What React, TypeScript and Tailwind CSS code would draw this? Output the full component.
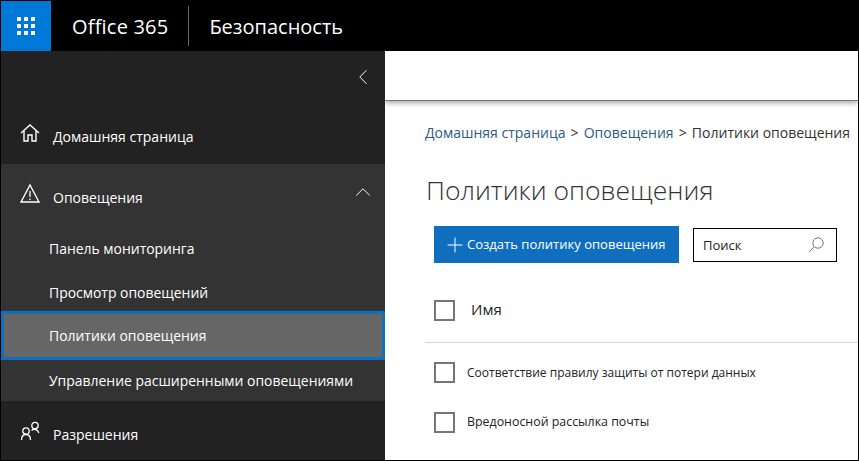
import { ChevronLeft, ChevronUp, Plus } from 'lucide-react';

const font = "font-['Open_Sans','Noto_Sans',sans-serif]";

function WaffleIcon() {
  const cells = [0, 7, 14];
  return (
    <svg width="18" height="18" viewBox="0 0 18 18" fill="#ffffff">
      {cells.map((y) => cells.map((x) => <rect key={`${x}-${y}`} x={x} y={y} width="4" height="4" />))}
    </svg>
  );
}

function HomeIcon() {
  return (
    <svg width="20" height="20" viewBox="0 0 20 20" fill="none" stroke="#ffffff" strokeWidth="1.4">
      <path d="M1 10 L10 2 L19 10" />
      <path d="M4 8 V18 H8 V12 H12 V18 H16 V8" />
    </svg>
  );
}

function AlertIcon() {
  return (
    <svg className="mb-[2px]" width="20" height="20" viewBox="0 0 20 20" fill="none" stroke="#ffffff" strokeWidth="1.4">
      <path d="M10 2 L19 19 H1 Z" />
      <path d="M10 8 V14 M10 15.5 V17" stroke="#e8e8e8" />
    </svg>
  );
}

function PeopleIcon() {
  return (
    <svg width="20" height="20" viewBox="0 0 20 20" fill="none" stroke="#ffffff" strokeWidth="1.3">
      <circle cx="6" cy="10" r="3.2" />
      <path d="M1.5 19 C1.5 15.5 3.5 13.5 6 13.5 C8.5 13.5 10.5 15.5 10.5 19" />
      <circle cx="15" cy="4.5" r="3.2" />
      <path d="M11.5 9.5 C13.5 7.5 18 8 18.8 12" />
    </svg>
  );
}

function SearchGlyph() {
  return (
    <svg width="16" height="16" viewBox="0 0 16 16" fill="none" stroke="#777777" strokeWidth="1">
      <circle cx="10" cy="6" r="5.2" />
      <path d="M6.2 9.8 L0.8 15" />
    </svg>
  );
}

function Checkbox() {
  return <div className="w-[21px] h-[21px] border-2 border-[#767676] shrink-0" />;
}

export default function App() {
  return (
    <div className={`${font} w-[859px] h-[461px] overflow-hidden flex flex-col bg-black border-x border-b border-black`}>
      {/* Header */}
      <div className="h-[51px] shrink-0 flex items-center bg-black text-white">
        <div className="w-[50px] h-[50px] self-end flex items-center justify-center bg-[#0078d7]">
          <WaffleIcon />
        </div>
        <div className="ml-[21px] mt-[2px] text-[20px] tracking-[0.2px]">Office 365</div>
        <div className="ml-[20px] w-px h-[40px] bg-[#666666]" />
        <div className="ml-[20px] mt-[2px] text-[20px]">Безопасность</div>
      </div>

      <div className="flex-1 flex min-h-0">
        {/* Sidebar */}
        <div className="w-[384px] shrink-0 flex flex-col bg-[#222222] text-white">
          <div className="h-[113px] shrink-0">
            <div className="h-[52px] flex items-start justify-end pt-[13px] pr-[9px]">
              <ChevronLeft size={26} strokeWidth={0.9} />
            </div>
            <div className="flex items-center pl-[19px] h-[30px] gap-[13px] mt-[15px] text-[14px]">
              <HomeIcon />
              <span className="mt-[6px]">Домашняя страница</span>
            </div>
          </div>
          <div className="h-[237px] shrink-0 bg-[#333333] text-[13.95px]">
            <div className="h-[60px] flex items-center pl-[19px] pr-[9px] gap-[13px] text-[14px]">
              <AlertIcon />
              <span className="flex-1 mt-[6px]">Оповещения</span>
              <ChevronUp className="mb-[4px]" size={26} strokeWidth={0.9} />
            </div>
            <div className="h-[44px] pt-[6px] flex items-center pl-[48px]">Панель мониторинга</div>
            <div className="h-[43px] pt-[8px] flex items-center pl-[48px]">Просмотр оповещений</div>
            <div className="h-[49px] pt-[1px] flex items-center pl-[45px] bg-[#666666] border-[3px] border-[#106ebe]">
              Политики оповещения
            </div>
            <div className="h-[41px] pt-[2px] flex items-center pl-[48px]">Управление расширенными оповещениями</div>
          </div>
          <div className="flex items-center pl-[19px] h-[59px] gap-[13px] text-[14px]">
            <PeopleIcon />
            <span className="mt-[8px]">Разрешения</span>
          </div>
        </div>

        {/* Content */}
        <div className="flex-1 min-w-0 bg-white overflow-hidden">
          <div className="h-[50px] bg-white border-b border-[#777777] shadow-[0_2px_5px_rgba(0,0,0,0.35)]" />
          <div className="pl-[40px] pt-[22px] text-[14px] leading-5 whitespace-nowrap text-[#333333]">
            <span className="text-[#2b5a84]">Домашняя страница</span>
            <span className="px-[1.5px]"> &gt; </span>
            <span className="text-[#2b5a84]">Оповещения</span>
            <span className="px-[1.5px]"> &gt; </span>
            <span>Политики оповещения</span>
          </div>
          <h1 className="pl-[41px] mt-[29px] text-[26.5px] leading-9 font-light text-[#333333]">Политики оповещения</h1>
          <div className="flex items-center pl-[49px] mt-[18px]">
            <div className="w-[245px] h-[37px] flex items-center pl-[9px] bg-[#106ebe] text-white text-[13.05px]">
              <Plus size={24} strokeWidth={1} />
              <span>Создать политику оповещения</span>
            </div>
            <div className="ml-[14px] w-[144px] h-[34px] flex items-center justify-between pl-[9px] pr-[12px] border border-black text-[13px] text-[#222222]">
              <span className="mt-[2px]">Поиск</span>
              <SearchGlyph />
            </div>
          </div>
          <div className="ml-[40px] mt-[20px] h-[60px] pb-[4px] flex items-center pl-[9px] border-b border-[#d4d4d4]">
            <Checkbox />
            <span className="ml-[16px] mb-[2px] text-[15px] font-medium text-[#222222]">Имя</span>
          </div>
          <div className="ml-[49px] mt-[19px] h-[21px] flex items-center">
            <Checkbox />
            <span className="ml-[12px] text-[12px] text-[#222222]">Соответствие правилу защиты от потери данных</span>
          </div>
          <div className="ml-[49px] mt-[29px] h-[21px] flex items-center">
            <Checkbox />
            <span className="ml-[12px] text-[12.4px] text-[#222222]">Вредоносной рассылка почты</span>
          </div>
        </div>
      </div>
    </div>
  );
}
